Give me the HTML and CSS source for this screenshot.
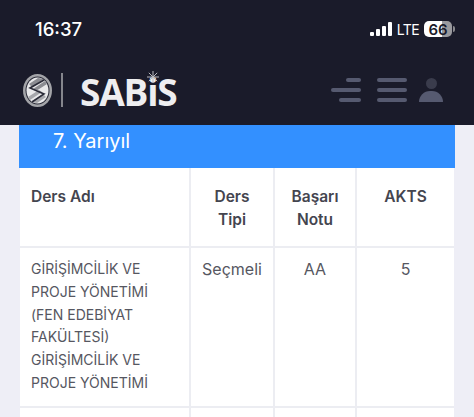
FILE: index.html
```html
<!DOCTYPE html>
<html lang="en">
<head>
    <meta charset="UTF-8">
    <meta name="viewport" content="width=device-width, initial-scale=1.0">
    <title>SABiS</title>
    <link rel="stylesheet" href="styles.css">
</head>
<body>

    <header class="topbar">
        <div class="status">
            <span class="clock">16:37</span>
            <div class="status-right">
                <span class="signal">
                    <i class="s1"></i><i class="s2"></i><i class="s3"></i><i class="s4"></i>
                </span>
                <span class="lte">LTE</span>
                <span class="battery"><span class="battery-num">66</span></span>
                <span class="battery-tip"></span>
            </div>
        </div>
        <div class="nav">
            <div class="brand">
                <svg class="logo" width="29" height="33" viewBox="0 0 29 33">
                    <ellipse cx="14.5" cy="16.5" rx="14.5" ry="16.5" fill="#a3a4a8"/>
                    <ellipse cx="14.5" cy="16.5" rx="12" ry="14" fill="#2a2b38"/>
                    <ellipse cx="14.5" cy="16.5" rx="11" ry="13" fill="#e9e9eb"/>
                    <path d="M6 10 L15 4 L21 5 L9 13 Z M10 15 L22 7 L24 10 L13 17 Z" fill="#8b8c92"/>
                    <path d="M23 23 L14 29 L8 28 L20 20 Z M19 18 L7 26 L5 23 L16 16 Z" fill="#a6a7ac"/>
                    <path d="M21 6 L7 14 L21 20 L9 28" stroke="#2a2b38" stroke-width="1.6" fill="none"/>
                </svg>
                <span class="brand-line"></span>
                <span class="brand-name">SABiS<svg class="spark" width="12" height="12" viewBox="0 0 12 12"><path d="M6 0V12M0 6H12M1.8 1.8L10.2 10.2M10.2 1.8L1.8 10.2" stroke="#b9babf" stroke-width="1"/></svg></span>
            </div>
            <div class="nav-icons">
                <span class="lines lines-left"><i class="w15"></i><i class="w30"></i><i class="w22"></i></span>
                <span class="lines"><i class="w30"></i><i class="w30"></i><i class="w30"></i></span>
                <span class="user"><i class="user-head"></i><i class="user-body"></i></span>
            </div>
        </div>
    </header>

    <main class="content">
        <div class="term">7. Yarıyıl</div>
        <table class="grades">
            <thead>
                <tr>
                    <th class="col-name">Ders Adı</th>
                    <th class="col-type">Ders Tipi</th>
                    <th class="col-grade">Başarı Notu</th>
                    <th>AKTS</th>
                </tr>
            </thead>
            <tbody>
                <tr>
                    <td class="col-name">GİRİŞİMCİLİK VE PROJE YÖNETİMİ (FEN EDEBİYAT FAKÜLTESİ) GİRİŞİMCİLİK VE PROJE YÖNETİMİ</td>
                    <td>Seçmeli</td>
                    <td>AA</td>
                    <td>5</td>
                </tr>
                <tr class="row-next">
                    <td></td><td></td><td></td><td></td>
                </tr>
            </tbody>
        </table>
    </main>

</body>
</html>
```

FILE: styles.css
```css
html, body {
    height: 417px;
    overflow: hidden;
}
body {
    margin: 0;
    background-color: #eeeef6;
    font-family: Inter, "Open Sans", sans-serif;
    color: #44454f;
}
.topbar {
    height: 125px;
    box-sizing: border-box;
    background-color: #1a1b2a;
    padding: 19px 19px 0 23px;
}
.status {
    display: flex;
    justify-content: space-between;
    align-items: center;
    height: 20px;
}
.clock {
    margin-left: 12px;
    color: #fff;
    font-size: 18.5px;
    font-weight: 500;
}
.status-right {
    display: flex;
    align-items: center;
}
.signal {
    display: flex;
    align-items: flex-end;
    gap: 2px;
    height: 14px;
    margin-right: 5px;
}
.signal i {
    width: 4px;
    background: #fff;
    border-radius: 1px;
}
.s1 { height: 4px; }
.s2 { height: 7px; }
.s3 { height: 10px; }
.s4 { height: 14px; }
.lte {
    color: #fff;
    font-size: 14px;
    letter-spacing: -0.6px;
    margin-right: 5px;
}
.battery {
    width: 28px;
    height: 16px;
    border-radius: 5px;
    background: linear-gradient(to right, #fff 66%, #9a9a9e 66%);
    display: flex;
    align-items: center;
    justify-content: center;
}
.battery-num {
    color: #1a1b2a;
    font-size: 15px;
    font-weight: 600;
}
.battery-tip {
    width: 2px;
    height: 6px;
    margin-left: 1px;
    background: #8a8a8e;
    border-radius: 0 2px 2px 0;
}
.nav {
    display: flex;
    justify-content: space-between;
    align-items: center;
    margin-top: 33px;
    padding-right: 12px;
    height: 36px;
}
.brand {
    display: flex;
    align-items: center;
}
.brand-line {
    width: 2px;
    height: 34px;
    margin: 0 17px 0 9px;
    background: #85868c;
}
.brand-name {
    position: relative;
    padding-top: 3px;
    color: #eeeef0;
    font-family: "Open Sans", sans-serif;
    font-size: 37px;
    font-weight: 700;
    letter-spacing: -1.2px;
    line-height: 36px;
}
.spark {
    position: absolute;
    left: 67px;
    top: 0;
}
.nav-icons {
    display: flex;
    align-items: center;
    gap: 16px;
}
.lines {
    display: flex;
    flex-direction: column;
    align-items: flex-end;
    gap: 6px;
    width: 30px;
}
.lines i {
    height: 4px;
    background: #565a70;
    border-radius: 2px;
}
.w15 { width: 15px; }
.w22 { width: 22px; }
.w30 { width: 30px; }
.user {
    display: flex;
    flex-direction: column;
    align-items: center;
    gap: 2px;
    width: 24px;
    margin-left: -4px;
}
.user-head {
    width: 11px;
    height: 11px;
    border-radius: 50%;
    background: #3a3c4c;
}
.user-body {
    width: 24px;
    height: 11px;
    border-radius: 12px 12px 0 0;
    background: #565a70;
}
.content {
    padding: 0 19px;
}
.term {
    height: 43px;
    box-sizing: border-box;
    padding: 3px 0 0 34px;
    background-color: #3390ff;
    color: #fff;
    font-size: 20px;
    line-height: 26px;
}
.grades {
    width: 434px;
    margin-left: 1px;
    border-collapse: collapse;
    table-layout: fixed;
    background-color: #fff;
    font-size: 16px;
    line-height: 23px;
}
.grades th, .grades td {
    box-sizing: border-box;
    border: 2px solid #ecedf2;
    padding: 10px;
    text-align: center;
    vertical-align: top;
}
.grades td {
    padding-bottom: 11px;
    color: #565761;
}
.grades tr > :first-child { border-left: 0; }
.grades tr > :last-child { border-right: 0; }
.grades thead th {
    border-top: 0;
    padding-top: 17px;
    padding-bottom: 15px;
    font-size: 15.5px;
    font-weight: 600;
}
.grades .col-name {
    width: 170px;
    padding-left: 11px;
    text-align: left;
}
.col-type { width: 84px; }
.col-grade { width: 82px; }
.grades td.col-name {
    font-size: 14px;
    line-height: 22.8px;
}
.row-next td {
    height: 40px;
}
```
